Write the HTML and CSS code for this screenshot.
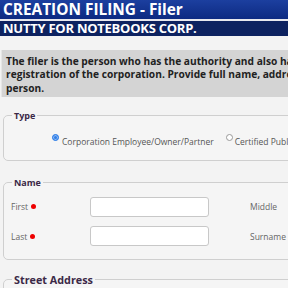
FILE: index.html
```html
<!DOCTYPE html>
<html>
<head>
<meta charset="utf-8">
<link rel="stylesheet" href="styles.css">
</head>
<body>
<div class="page">
  <div class="title">CREATION FILING - Filer</div>
  <div class="corp">NUTTY FOR NOTEBOOKS CORP.</div>
  <div class="spacer"></div>
  <div class="note">The filer is the person who has the authority and also has knowledge of the<br>registration of the corporation. Provide full name, address and contact details of that<br>person.</div>
  <fieldset class="group type">
    <legend>Type</legend>
    <div class="radios">
      <label class="radio"><span class="dot checked"></span>Corporation Employee/Owner/Partner</label>
      <label class="radio"><span class="dot"></span>Certified Public Accountant</label>
    </div>
  </fieldset>
  <fieldset class="group name">
    <legend>Name</legend>
    <div class="row first">
      <span class="lbl">First<span class="req"></span></span>
      <span class="input"></span>
      <span class="lbl2">Middle</span>
    </div>
    <div class="row">
      <span class="lbl">Last<span class="req"></span></span>
      <span class="input"></span>
      <span class="lbl2">Surname</span>
    </div>
  </fieldset>
  <fieldset class="group big">
    <legend>Street Address</legend>
  </fieldset>
</div>
</body>
</html>
```
FILE: styles.css
```css
html, body { margin: 0; padding: 0; background: #f3f3f3; overflow: hidden; }
body { font-family: "Open Sans", sans-serif; width: 288px; height: 288px; }
.page { width: 480px; }
.title {
  height: 19px; line-height: 19px; padding-left: 3px;
  background: linear-gradient(#1c3f9f, #0d2a82);
  color: #fff; font-weight: 700; font-size: 15.4px;
  border-bottom: 2px solid #e8e8ee;
}
.corp {
  height: 15px; line-height: 15px; padding-left: 3px;
  background: #0d2260; color: #fff; font-weight: 700; font-size: 13px; letter-spacing: -0.25px;
}
.spacer { height: 14px; background: #f3f3f3; }
.note {
  margin-left: 1px; padding: 5px 3px 2px 4px;
  background: #d4d4d4; border-left: 1px solid #e6e6e6;
  color: #222; font-weight: 700; font-size: 10.2px; line-height: 13.3px;
  white-space: nowrap;
}
.group {
  margin: 15px 0 0 3px; padding: 0 0 0 8px;
  border: 1px solid #cfcfcf; border-radius: 5px; background: #f5f5f5;
}
.group.type { margin-top: 12px; }
.group legend {
  padding: 0 2px; font-weight: 700; font-size: 9px; color: #3b2947;
}
.radios { display: flex; padding: 14px 0 13px 40px; gap: 12px; }
.radio { display: flex; align-items: center; font-size: 8.5px; color: #555; white-space: nowrap; }
.dot {
  width: 7px; height: 7px; border-radius: 50%; border: 1px solid #999; background: #fff;
  margin-right: 2px; box-sizing: border-box; margin-top: -8px;
}
.dot.checked { border: 1px solid #2e7ee8; background: #2e7ee8; box-shadow: inset 0 0 0 1px #8fbaf3; margin-right: 3px; }
.row { display: flex; align-items: center; height: 29.5px; }
.row.first { margin-top: 3px; }
.lbl { width: 79px; margin-left: -1px; font-size: 8.5px; color: #666; display: flex; align-items: center; }
.req { width: 5px; height: 5px; background: #e00; border-radius: 50%; margin-left: 3px; }
.input {
  width: 119px; height: 20px; background: #fff; border: 1px solid #c8c8c8; border-radius: 3px;
  box-sizing: border-box;
}
.lbl2 { margin-left: 41px; font-size: 8.5px; color: #666; }
.name .row:last-child { margin-bottom: 8px; }
.big { margin-top: 12px; height: 30px; }
.big legend { font-size: 10.8px; }
```
